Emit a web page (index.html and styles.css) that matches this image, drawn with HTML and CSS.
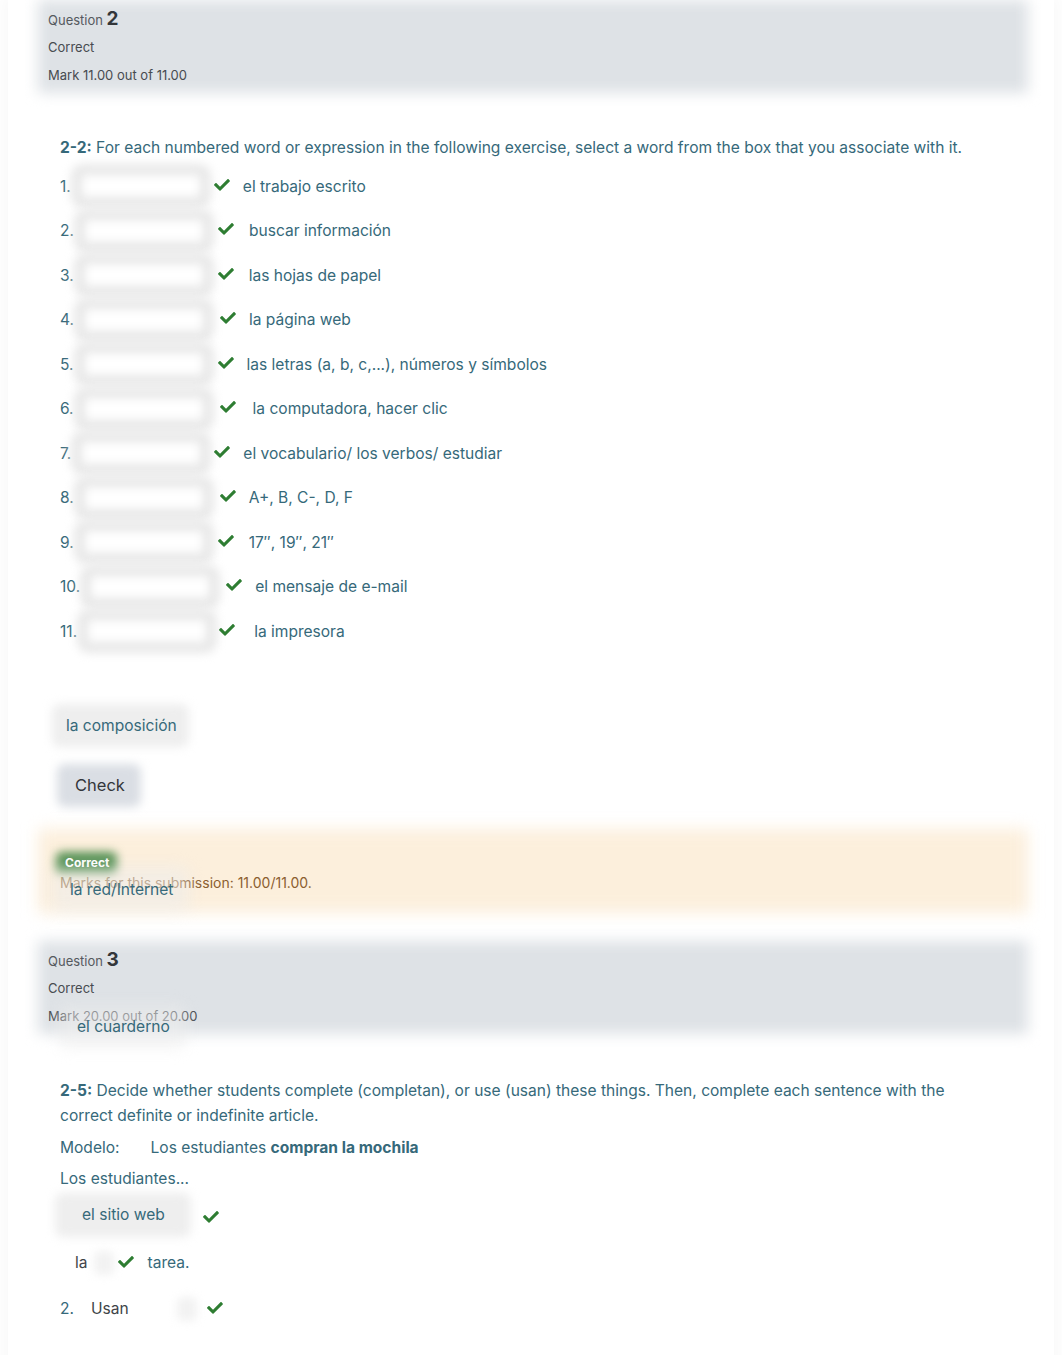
FILE: index.html
```html
<!DOCTYPE html>
<html lang="en">
<head>
<meta charset="utf-8">
<title>Quiz review</title>
<link rel="stylesheet" href="styles.css">
</head>
<body>
<svg width="0" height="0" class="defs" aria-hidden="true">
  <symbol id="ok" viewBox="0 0 512 420">
    <path d="M173.9 407.4l-166.4-166.4c-10-10-10-26.2 0-36.2l36.2-36.2c10-10 26.2-10 36.2 0L192 280.7 432.1 40.6c10-10 26.2-10 36.2 0l36.2 36.2c10 10 10 26.2 0 36.2l-294.4 294.4c-10 10-26.2 10-36.2 0z"/>
  </symbol>
</svg>
<div class="page">
  <section class="info soft">
    <div class="info-line"><span class="qlabel">Question</span> <span class="qno">2</span></div>
    <div class="info-line">Correct</div>
    <div class="info-line">Mark 11.00 out of 11.00</div>
  </section>

  <div class="content">
    <p class="qtext"><b>2-2:</b> For each numbered word or expression in the following exercise, select a word from the box that you associate with it.</p>
    <div class="rows">
      <div class="row"><span class="num">1.</span><span class="drop"></span><svg class="ok c0"><use href="#ok"/></svg><span class="ans a0">el trabajo escrito</span></div>
      <div class="row"><span class="num">2.</span><span class="drop"></span><svg class="ok c2"><use href="#ok"/></svg><span class="ans a2">buscar información</span></div>
      <div class="row"><span class="num">3.</span><span class="drop"></span><svg class="ok c2"><use href="#ok"/></svg><span class="ans a2">las hojas de papel</span></div>
      <div class="row"><span class="num">4.</span><span class="drop"></span><svg class="ok c4"><use href="#ok"/></svg><span class="ans a0">la página web</span></div>
      <div class="row"><span class="num">5.</span><span class="drop"></span><svg class="ok c2"><use href="#ok"/></svg><span class="ans a1">las letras (a, b, c,...), números y símbolos</span></div>
      <div class="row"><span class="num">6.</span><span class="drop"></span><svg class="ok c4"><use href="#ok"/></svg><span class="ans a3">la computadora, hacer clic</span></div>
      <div class="row"><span class="num">7.</span><span class="drop"></span><svg class="ok c0"><use href="#ok"/></svg><span class="ans a0">el vocabulario/ los verbos/ estudiar</span></div>
      <div class="row"><span class="num">8.</span><span class="drop"></span><svg class="ok c4"><use href="#ok"/></svg><span class="ans a0">A+, B, C-, D, F</span></div>
      <div class="row"><span class="num">9.</span><span class="drop"></span><svg class="ok c2"><use href="#ok"/></svg><span class="ans a2">17″, 19″, 21″</span></div>
      <div class="row"><span class="num">10.</span><span class="drop"></span><svg class="ok c10"><use href="#ok"/></svg><span class="ans a0">el mensaje de e-mail</span></div>
      <div class="row"><span class="num">11.</span><span class="drop"></span><svg class="ok c11"><use href="#ok"/></svg><span class="ans a4">la impresora</span></div>
    </div>

    <div class="chip soft chip-comp">la composición</div>
    <button class="check-btn soft" type="button">Check</button>
  </div>

  <section class="feedback soft">
    <span class="badge soft">Correct</span>
    <div class="marks">Marks for this submission: 11.00/11.00.</div>
    <div class="chip soft chip-float chip-red">la red/Internet</div>
  </section>

  <section class="info soft info-q3">
    <div class="info-line"><span class="qlabel">Question</span> <span class="qno">3</span></div>
    <div class="info-line">Correct</div>
    <div class="info-line">Mark 20.00 out of 20.00</div>
    <div class="chip soft chip-float chip-cuad">el cuarderno</div>
  </section>

  <div class="content content-q3">
    <p class="qtext q3text"><b>2-5:</b> Decide whether students complete (completan), or use (usan) these things. Then, complete each sentence with the correct definite or indefinite article.</p>
    <p class="para">Modelo:<span class="tab"></span>Los estudiantes <b>compran la mochila</b></p>
    <p class="para">Los estudiantes...</p>
    <div class="line line-web"><span class="chip soft chip-web">el sitio web</span><svg class="ok"><use href="#ok"/></svg></div>
    <div class="line line-la"><span class="dark">la</span><span class="mini"></span><svg class="ok"><use href="#ok"/></svg><span class="tarea">tarea.</span></div>
    <div class="line line-usan"><span class="num2">2.</span><span class="dark">Usan</span><span class="mini mini-usan"></span><svg class="ok"><use href="#ok"/></svg></div>
  </div>
</div>
</body>
</html>
```

FILE: styles.css
```css
html, body {
  margin: 0;
  padding: 0;
  background: #ffffff;
}
body {
  font-family: Inter, "Noto Sans", "Liberation Sans", sans-serif;
  color: #36697a;
  overflow: hidden;
}
.defs {
  position: absolute;
  width: 0;
  height: 0;
}
.page {
  margin: 0 8px;
  padding: 0 26px 40px 30px;
  min-height: 1355px;
  box-shadow: 0 0 16px 4px rgba(0, 0, 0, 0.03);
  isolation: isolate;
}

/* soft (blurred) backgrounds */
.soft {
  position: relative;
  isolation: isolate;
}
.soft::before {
  content: "";
  position: absolute;
  inset: 0;
  z-index: -1;
  border-radius: inherit;
  background: var(--bg);
  filter: blur(var(--blur, 5px));
}

/* info boxes */
.info {
  --bg: #dee2e6;
  --blur: 7px;
  padding: 5px 10px 4px;
  color: #474b50;
  font-size: 13px;
}
.info-line {
  height: 28px;
  line-height: 28px;
}
.qlabel {
  font-size: 13px;
  color: #55595e;
}
.qno {
  font-size: 19px;
  font-weight: 700;
  color: #33363a;
}

/* main content */
.content {
  padding: 43px 22px 0;
}
.qtext {
  margin: 0 0 4px;
  font-size: 15.55px;
  line-height: 24px;
}
.qtext b {
  font-weight: 700;
}
.rows {
  display: flex;
  flex-direction: column;
}
.row {
  display: flex;
  align-items: center;
  height: 44.5px;
  font-size: 15.55px;
}
.num {
  margin-right: 11px;
}
.drop {
  width: 118px;
  height: 22px;
  background: #ffffff;
  border-radius: 4px;
  box-shadow: 0 0 0 11px #e8e8e8;
  filter: blur(5px);
}
.ok {
  width: 16px;
  height: 13px;
  fill: #2e7d32;
  flex: none;
  position: relative;
  top: -2px;
}
.c0 { margin-left: 14px; }
.c2 { margin-left: 15px; }
.c4 { margin-left: 17px; }
.c10 { margin-left: 17px; }
.c11 { margin-left: 13px; }
.ans { margin-left: 13px; }
.a1 { margin-left: 13px; }
.a2 { margin-left: 15px; }
.a3 { margin-left: 17px; }
.a4 { margin-left: 19px; }

.chip {
  --bg: #eeeeee;
  display: inline-block;
  border-radius: 8px;
  color: #36697a;
  font-size: 15.55px;
  line-height: 43px;
  height: 43px;
  padding: 0 12px 0 14px;
}
.chip-comp {
  display: block;
  width: fit-content;
  margin: 50px 0 0 -8px;
}
.check-btn {
  --bg: #dadee4;
  display: block;
  margin: 17px 0 0 -3px;
  height: 43px;
  padding: 0 16px 0 18px;
  border: none;
  border-radius: 8px;
  background: transparent;
  font-family: Inter, "Noto Sans", sans-serif;
  font-size: 16.5px;
  color: #33363a;
}

/* feedback */
.feedback {
  --bg: #fcefdc;
  --blur: 8px;
  margin-top: 22px;
  height: 84px;
  padding: 0 22px;
  box-sizing: border-box;
}
.badge {
  --bg: #4f8d4e;
  --blur: 5px;
  display: inline-block;
  margin: 23px 0 0 -4px;
  border-radius: 6px;
  color: #ffffff;
  font-size: 12px;
  font-weight: 700;
  line-height: 22px;
  padding: 0 8px 0 9px;
}
.marks {
  color: #8b5e2f;
  font-size: 14px;
  line-height: 16px;
  margin-top: 1px;
}
.chip-float {
  --bg: rgba(236, 236, 236, 0.55);
  position: absolute;
  padding: 0 16px 0 18px;
}
.chip-red {
  left: 14px;
  top: 38px;
  height: 44px;
  line-height: 46px;
}
.chip-cuad {
  left: 21px;
  top: 64px;
  height: 44px;
  line-height: 44px;
}

.info-q3 {
  margin-top: 28px;
}
.content-q3 {
  padding-top: 44px;
}
.q3text {
  max-width: 900px;
  line-height: 25px;
  margin-bottom: 4px;
}
.para {
  margin: 0;
  font-size: 15.55px;
  line-height: 31px;
}
.para b {
  font-weight: 700;
}
.tab {
  display: inline-block;
  width: 31px;
}
.line {
  display: flex;
  align-items: center;
  font-size: 15.55px;
}
.line-web {
  margin-top: -1px;
  height: 44px;
}
.chip-web {
  margin-left: -5px;
  padding: 0 26px 0 27px;
  line-height: 44px;
  height: 44px;
}
.line-web .ok {
  margin-left: 12px;
  top: 2px;
}
.line-la {
  height: 50px;
  margin-top: 1px;
  padding-left: 15px;
}
.dark {
  color: #404448;
}
.mini {
  width: 20px;
  height: 24px;
  margin-left: 6px;
  background: #f2f2f2;
  border-radius: 6px;
  filter: blur(4px);
}
.line-la .ok {
  margin-left: 4px;
  top: -1px;
}
.tarea {
  margin-left: 14px;
}
.line-usan {
  height: 42px;
}
.num2 {
  width: 31px;
}
.mini-usan {
  margin-left: 48px;
}
.line-usan .ok {
  margin-left: 10px;
  top: -1px;
}
```
